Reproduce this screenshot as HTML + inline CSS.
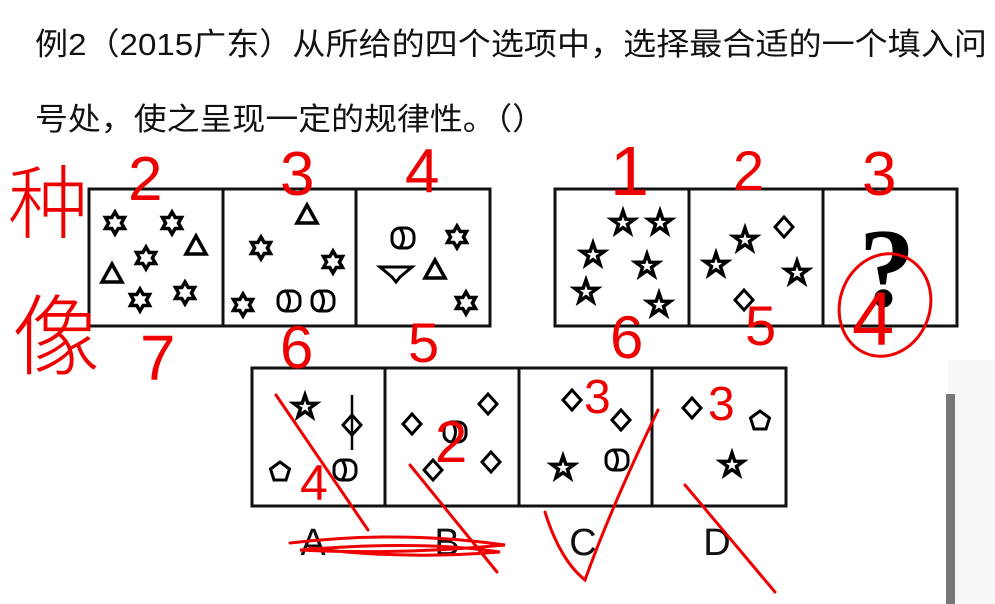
<!DOCTYPE html>
<html><head><meta charset="utf-8"><style>
html,body{margin:0;padding:0;background:#fff;width:995px;height:604px;overflow:hidden}
svg{display:block}
</style></head><body>
<svg width="995" height="604" viewBox="0 0 995 604" xmlns="http://www.w3.org/2000/svg">
<defs>
<polygon id="hex" points="0,-11 3.2,-5.5 9.5,-5.5 6.4,0 9.5,5.5 3.2,5.5 0,11 -3.2,5.5 -9.5,5.5 -6.4,0 -9.5,-5.5 -3.2,-5.5" fill="none" stroke="#000" stroke-width="3.5"/>
<polygon id="star" points="0,-12 2.8,-3.8 11.4,-3.7 4.5,1.4 7.1,9.7 0,4.7 -7.1,9.7 -4.5,1.4 -11.4,-3.7 -2.8,-3.8" fill="none" stroke="#000" stroke-width="3.5"/>
<polygon id="tri" points="0,-10 10,8 -10,8" fill="none" stroke="#000" stroke-width="3.5"/>
<polygon id="dia" points="0,-10 9,0 0,10 -9,0" fill="none" stroke="#000" stroke-width="3"/>
<polygon id="pent" points="0,-10 9.5,-3 6,8 -6,8 -9.5,-3" fill="none" stroke="#000" stroke-width="3"/>
<g id="cyl" fill="none" stroke="#000" stroke-width="3"><rect x="-11" y="-10" width="22" height="20" rx="8"/><path d="M-3,-10 Q4,0 -3,10"/></g>
</defs>
<g font-family="Liberation Sans, Noto Sans CJK SC, sans-serif" font-size="31" fill="#111">
<text x="35" y="55" textLength="952" lengthAdjust="spacingAndGlyphs">例2（2015广东）从所给的四个选项中，选择最合适的一个填入问</text>
<text x="35" y="130" textLength="510" lengthAdjust="spacingAndGlyphs">号处，使之呈现一定的规律性。（）</text>
</g>
<g fill="none" stroke="#111" stroke-width="3">
<rect x="89" y="189" width="401" height="137"/><line x1="223" y1="189" x2="223" y2="326"/><line x1="356" y1="189" x2="356" y2="326"/>
<rect x="555" y="189" width="402" height="137"/><line x1="689" y1="189" x2="689" y2="326"/><line x1="823" y1="189" x2="823" y2="326"/>
<rect x="252" y="368" width="534" height="138"/><line x1="385" y1="368" x2="385" y2="506"/><line x1="519" y1="368" x2="519" y2="506"/><line x1="652" y1="368" x2="652" y2="506"/>
</g>
<use href="#hex" x="115" y="223"/><use href="#hex" x="172" y="223"/><use href="#hex" x="146" y="258"/><use href="#hex" x="140" y="300"/><use href="#hex" x="185" y="293"/>
<use href="#tri" x="196" y="246"/><use href="#tri" x="112" y="274"/>
<use href="#tri" x="307" y="215"/><use href="#hex" x="261" y="248"/><use href="#hex" x="333" y="262"/><use href="#hex" x="243" y="305"/>
<use href="#cyl" x="289" y="301"/><use href="#cyl" x="323" y="301"/>
<use href="#cyl" x="403" y="238"/><use href="#hex" x="457" y="237"/><use href="#tri" x="435" y="270"/><use href="#hex" x="466" y="303"/>
<polygon points="380,267 412,267 400,277 396,282 392,277" fill="none" stroke="#000" stroke-width="3"/>
<use href="#star" x="623" y="223"/><use href="#star" x="660" y="223"/><use href="#star" x="593" y="255"/><use href="#star" x="647" y="266"/><use href="#star" x="586" y="292"/><use href="#star" x="659" y="305"/>
<use href="#star" x="745" y="240"/><use href="#dia" x="784" y="227"/><use href="#star" x="716" y="265"/><use href="#star" x="797" y="273"/><use href="#dia" x="744" y="300"/>
<text x="887" y="306" font-family="Liberation Serif, serif" font-size="112" font-weight="bold" text-anchor="middle" fill="#000">?</text>
<use href="#star" x="305" y="407"/><use href="#dia" x="352" y="425"/><line x1="352" y1="395" x2="352" y2="450" stroke="#000" stroke-width="2.5"/><use href="#pent" x="280" y="472"/><use href="#cyl" x="345" y="470"/>
<use href="#dia" x="412" y="424"/><use href="#dia" x="488" y="404"/><use href="#dia" x="491" y="462"/><use href="#dia" x="433" y="470"/><use href="#cyl" x="455" y="432"/>
<use href="#dia" x="572" y="400"/><use href="#dia" x="621" y="420"/><use href="#star" x="563" y="468"/><use href="#cyl" x="617" y="460"/>
<use href="#dia" x="692" y="408"/><use href="#pent" x="760" y="421"/><use href="#star" x="732" y="465"/>
<g font-family="Liberation Sans, sans-serif" font-size="38" fill="#111" text-anchor="middle">
<text x="313" y="555">A</text><text x="447" y="555">B</text><text x="583" y="555">C</text><text x="717" y="555">D</text>
</g>
<rect x="948" y="360" width="47" height="244" fill="#f7f7f7"/>
<rect x="946" y="394" width="9" height="210" fill="#777"/>
<g fill="#e00" font-family="Liberation Sans, Noto Sans CJK SC, sans-serif">
<text x="8" y="232" font-size="80" font-family="Noto Sans CJK SC, sans-serif" font-weight="300">种</text>
<text x="12" y="368" font-size="88" font-family="Noto Sans CJK SC, sans-serif" font-weight="300">像</text>
<text x="128" y="200" font-size="62">2</text><text x="280" y="195" font-size="62">3</text><text x="405" y="192" font-size="62">4</text>
<text x="140" y="380" font-size="64">7</text><text x="280" y="368" font-size="60">6</text><text x="408" y="362" font-size="56">5</text>
<text x="610" y="195" font-size="70">1</text><text x="733" y="190" font-size="56">2</text><text x="862" y="195" font-size="62">3</text>
<text x="610" y="358" font-size="60">6</text><text x="745" y="345" font-size="56">5</text>
<text x="852" y="345" font-size="76">4</text>
<text x="300" y="500" font-size="50">4</text><text x="435" y="462" font-size="58">2</text><text x="584" y="413" font-size="48">3</text><text x="708" y="420" font-size="48">3</text>
</g>
<g fill="none" stroke="#e00" stroke-width="3" stroke-linecap="round">
<ellipse cx="885" cy="305" rx="45" ry="52" transform="rotate(20 885 305)"/>
<path d="M276,395 L368,530"/>
<path d="M410,465 L497,572"/>
<path d="M545,512 Q560,560 585,580 Q610,510 658,410"/>
<path d="M685,485 L775,592"/>
<path d="M290,543 Q400,530 505,545 Q400,555 300,550 Q420,540 500,552 Q400,560 310,548"/>
</g>
</svg>
</body></html>
